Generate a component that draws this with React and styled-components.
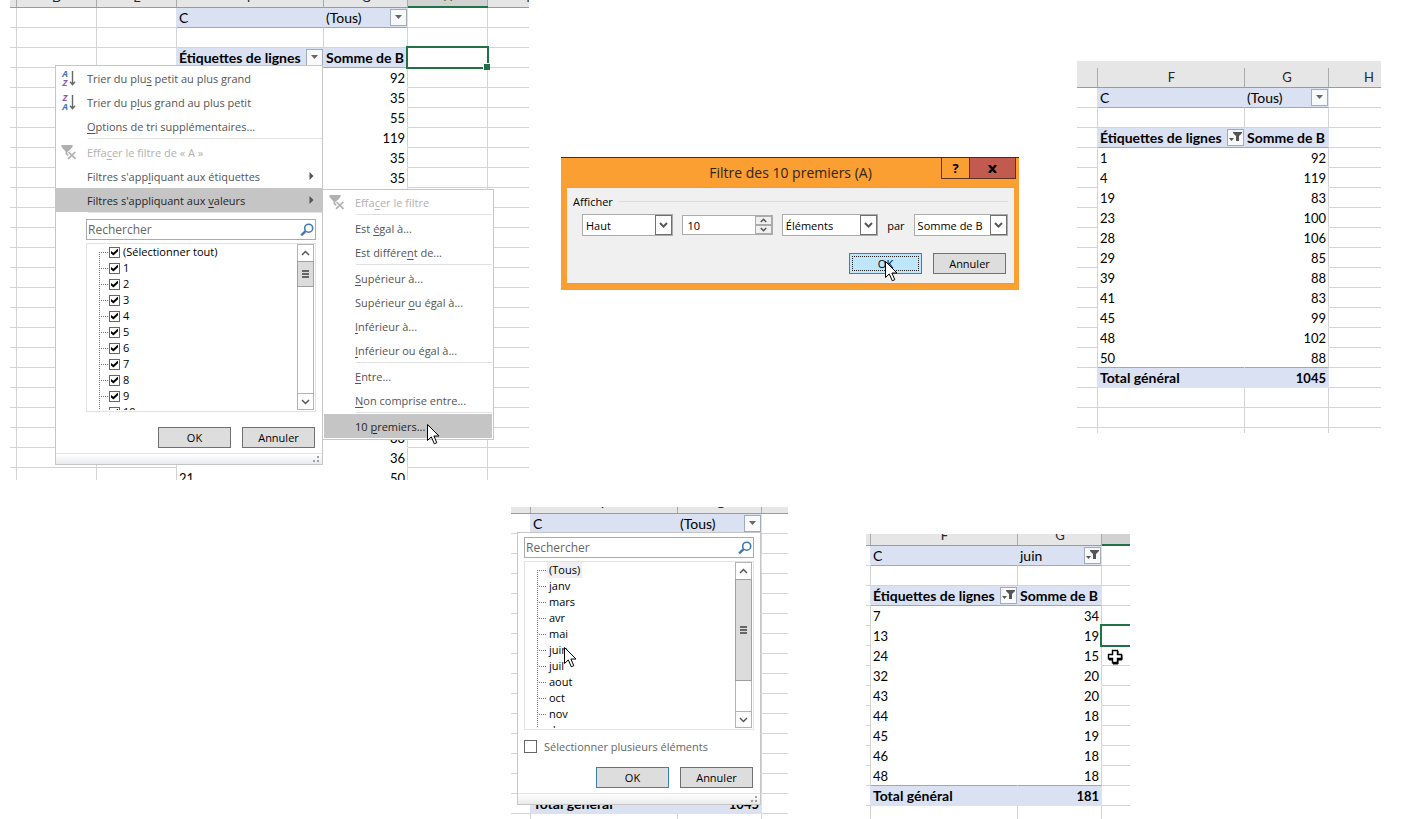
import React from "react";
import styled, { createGlobalStyle } from "styled-components";

const GlobalStyle = createGlobalStyle`
  * {
    box-sizing: border-box;
  }
  body {
    margin: 0;
    background: #fff;
    color: #000;
    font-family: "Open Sans", "Noto Sans", sans-serif;
    font-size: 11px;
  }
  button, input, select {
    font: inherit;
    color: inherit;
    margin: 0;
    padding: 0;
  }
`;

/* ---------- icons ---------- */

const ArrowCursor = () => (
  <svg width="13" height="21" viewBox="0 0 13 21" aria-hidden="true">
    <path d="M0.5 0.5V16.5L4.3 12.9L7.3 19.8L9.8 18.7L6.9 12H12Z" fill="#fff" stroke="#000" strokeLinejoin="miter" />
  </svg>
);

const CrossCursor = () => (
  <svg width="17" height="16" viewBox="0 0 17 16" aria-hidden="true">
    <path d="M6 2H11V6H15V11H11V15H6V11H2V6H6Z" fill="#000" stroke="#000" strokeWidth="1" />
    <path d="M5.5 1.5H10.5V5.5H14.5V9.5H10.5V13.5H5.5V9.5H1.5V5.5H5.5Z" fill="#fff" stroke="#000" strokeWidth="1.4" />
  </svg>
);

const CaretIcon = () => (
  <svg width="9" height="5" viewBox="0 0 9 5" aria-hidden="true">
    <path d="M1 0H8L4.5 4Z" fill="#666" />
  </svg>
);

const FilterIcon = () => (
  <svg width="15" height="13" viewBox="0 0 15 13" aria-hidden="true">
    <path d="M5 1H14V2L11 5V10H8V5L5 2Z" fill="#555" />
    <path d="M1 7H6L3.5 10Z" fill="#555" />
  </svg>
);

const SortLetter = styled.text`
  font-family: "Open Sans", sans-serif;
  font-size: 9px;
  font-weight: 700;
  text-anchor: middle;
`;

const SortIcon = ({ desc }) => (
  <svg width="16" height="17" viewBox="0 0 16 17" aria-hidden="true">
    <SortLetter x="4" y={desc ? 16 : 7} fill="#3f78b5">A</SortLetter>
    <SortLetter x="4" y={desc ? 7 : 16} fill="#8b57a8">Z</SortLetter>
    <path d="M11.5 1V14.5M9 11.8L11.5 14.6L14 11.8" fill="none" stroke="#666" strokeWidth="1.4" />
  </svg>
);

const ClearFilterIcon = () => (
  <svg width="16" height="16" viewBox="0 0 16 16" aria-hidden="true">
    <path d="M0.5 1H11.5V3L7.5 7.5V12.5L4.5 10V7.5L0.5 3Z" fill="#b0b0b0" />
    <path d="M7 7.5L15 15M14.5 7.5L6.5 15" stroke="#fff" strokeWidth="3.4" />
    <path d="M7.5 8L14.5 14.8M14.3 8L7 14.8" stroke="#b0b0b0" strokeWidth="1.7" />
  </svg>
);

const SearchIcon = () => (
  <svg width="14" height="14" viewBox="0 0 14 14" fill="none" stroke="#3f78b5" aria-hidden="true">
    <circle cx="8.7" cy="5.2" r="4" strokeWidth="1.6" />
    <path d="M5.6 8.2L1.2 12.4" strokeWidth="2.4" />
  </svg>
);

const Chevron = ({ up, bold }) => (
  <svg width="9" height="6" viewBox="0 0 9 6" fill="none" stroke="#555" strokeWidth={bold ? 2 : 1.4} aria-hidden="true">
    <path d={up ? "M1 5L4.5 1.4L8 5" : "M1 1L4.5 4.6L8 1"} />
  </svg>
);

const SubmenuArrow = () => (
  <svg width="5" height="8" viewBox="0 0 5 8" aria-hidden="true">
    <path d="M0.5 0V8L4.5 4Z" fill="#555" />
  </svg>
);

const Branch = ({ first, short }) => (
  <svg width={short ? 9 : 10} height="16" viewBox={`0 0 ${short ? 9 : 10} 16`} stroke="#777" strokeDasharray="1 1" aria-hidden="true">
    <path d={first ? "M0.5 8V16" : "M0.5 0V16"} />
    <path d="M2 8.5H10" />
  </svg>
);

const Grip = () => (
  <svg width="7" height="7" viewBox="0 0 7 7" fill="#a0a0a0" aria-hidden="true">
    <path d="M4 0H6V2H4ZM0 4H2V6H0ZM4 4H6V6H4Z" />
  </svg>
);

/* ---------- spreadsheet ---------- */

const SheetBox = styled.section`
  position: relative;
  overflow: hidden;
  margin-top: ${(p) => p.$top || 0}px;
  margin-left: ${(p) => p.$left || 0}px;
`;

const Table = styled.table`
  width: 100%;
  table-layout: fixed;
  border-collapse: separate;
  border-spacing: 0;
  font-family: Lato, "Liberation Sans", sans-serif;
  font-size: 13px;

  th, td {
    padding: 0;
    font-weight: normal;
    text-align: left;
  }
`;

const HeadCell = styled.th`
  background: ${(p) => (p.$selected ? "#d2d2d2" : "#e6e6e6")};
  border-bottom: ${(p) => (p.$selected ? "2px solid #217346" : "1px solid #9b9b9b")};
  color: ${(p) => (p.$selected ? "#217346" : "#262626")};
  overflow: hidden;
`;

const HeadLabel = styled.div`
  display: flex;
  justify-content: center;
  align-items: flex-end;
  height: ${(p) => p.$height}px;
  min-width: ${(p) => (p.$last ? 80 : 0)}px;
  line-height: 20px;
  overflow: hidden;
  background: linear-gradient(#ababab, #ababab) right bottom / ${(p) => (p.$last ? 0 : 1)}px 19px no-repeat;
`;

const GridCell = styled.td`
  position: relative;
  background: ${(p) => (p.$fill ? "#d9e1f2" : "#fff")};
  border-right: ${(p) => (p.$last ? 0 : 1)}px solid ${(p) => p.$right || "#d4d4d4"};
  border-bottom: ${(p) => (p.$cut ? 0 : 1)}px solid ${(p) => p.$bottom || "#d4d4d4"};
`;

const CellText = styled.div`
  display: flex;
  justify-content: ${(p) => (p.$end ? "flex-end" : "space-between")};
  align-items: center;
  height: ${(p) => p.$height}px;
  padding-left: 2px;
  padding-right: ${(p) => (p.$end ? 2 : 0)}px;
  overflow: hidden;
  white-space: nowrap;
  font-weight: ${(p) => (p.$bold ? "bold" : "normal")};
  font-size: ${(p) => (p.$number ? 13 : 14)}px;

  span {
    line-height: ${(p) => (p.$number ? 21 : 19)}px;
    align-self: flex-start;
  }
`;

const FilterButton = styled.button`
  display: flex;
  justify-content: center;
  align-items: center;
  flex: none;
  width: 17px;
  height: 17px;
  border: 1px solid #a3abb8;
  background: #f8f9fb;
`;

const Selection = styled.div`
  position: absolute;
  inset: -2px;
  right: ${(p) => (p.$open ? -8 : -2)}px;
  border: 2px solid #217346;
  z-index: 1;

  &::after {
    content: "";
    position: absolute;
    right: -3px;
    bottom: -3px;
    width: 6px;
    height: 6px;
    background: #217346;
    border: solid #fff;
    border-width: 1px 0 0 1px;
  }
`;

const BLUE = "#8ea9db";
const FILL = "#d9e1f2";

const edges = (kind) => {
  if (kind === "filter" || kind === "title") return { fill: true, bottom: BLUE, inner: FILL };
  if (kind === "total") return { fill: true, bottom: FILL, inner: FILL };
  if (kind === "last") return { bottom: BLUE, inner: "#fff" };
  if (kind === "data") return { bottom: "#fff", inner: "#fff" };
  return {};
};

const SheetRow = ({ row, before, after, selectedRow, openSelection }) => {
  const { kind, label, value, filters = {}, cut } = row;
  const e = edges(kind);
  const bold = kind === "title" || kind === "total";
  const height = cut || 19;
  return (
    <tr>
      {Array.from({ length: before }, (_, i) => (
        <GridCell key={i} $cut={cut} $right={e.fill && i === before - 1 ? FILL : undefined} />
      ))}
      <GridCell $fill={e.fill} $right={e.inner} $bottom={e.bottom} $cut={cut}>
        <CellText $height={height} $bold={bold} $number={typeof label === "number"}>
          <span>{label}</span>
          {filters.label && (
            <FilterButton type="button" aria-label="Filtrer les lignes">
              {filters.label === "on" ? <FilterIcon /> : <CaretIcon />}
            </FilterButton>
          )}
        </CellText>
      </GridCell>
      <GridCell $fill={e.fill} $right={e.fill ? FILL : undefined} $bottom={e.bottom} $cut={cut}>
        <CellText
          $height={height}
          $bold={bold}
          $number={typeof value === "number"}
          $end={kind === "data" || kind === "last" || kind === "total"}
        >
          <span>{value}</span>
          {filters.value && (
            <FilterButton type="button" aria-label="Filtrer C">
              {filters.value === "on" ? <FilterIcon /> : <CaretIcon />}
            </FilterButton>
          )}
        </CellText>
      </GridCell>
      {Array.from({ length: after }, (_, i) => (
        <GridCell key={i} $cut={cut} $last={i === after - 1}>
          {selectedRow && i === 0 && <Selection $open={openSelection} />}
        </GridCell>
      ))}
    </tr>
  );
};

const Sheet = ({ name, cols, heads, headHeight, selectedHead, rows, selected, openSelection, before, top, left, children }) => (
  <SheetBox aria-label={name} $top={top} $left={left}>
    <Table>
      <colgroup>
        {cols.map((w, i) => (
          <col key={i} style={{ width: w }} />
        ))}
      </colgroup>
      <thead>
        <tr>
          {heads.map((h, i) => (
            <HeadCell key={i} scope="col" $selected={selectedHead === i}>
              <HeadLabel $height={selectedHead === i ? headHeight - 2 : headHeight - 1} $last={i === heads.length - 1}>
                {h}
              </HeadLabel>
            </HeadCell>
          ))}
        </tr>
      </thead>
      <tbody>
        {rows.map((row, i) => (
          <SheetRow
            key={i}
            row={row}
            before={before}
            after={cols.length - before - 2}
            selectedRow={selected === i}
            openSelection={openSelection}
          />
        ))}
      </tbody>
    </Table>
    {children}
  </SheetBox>
);

/* ---------- popups ---------- */

const Popup = styled.div`
  position: absolute;
  left: ${(p) => p.$x}px;
  top: ${(p) => p.$y}px;
  width: ${(p) => p.$width}px;
  padding: ${(p) => (p.$inset ? "0 1px 1px" : 0)};
  background: #fff;
  border: 1px solid #c6c6c6;
  z-index: 2;
`;

const MenuItem = styled.button`
  display: flex;
  align-items: center;
  width: 100%;
  height: 24px;
  padding-right: 8px;
  border: 0;
  text-align: left;
  white-space: nowrap;
  background: ${(p) => (p.$active ? "#c5c5c5" : "transparent")};
  color: ${(p) => (p.disabled ? "#b1b1b1" : p.$active ? "#262626" : "#555")};

  span {
    flex: 1;
  }
  u {
    text-underline-offset: 2px;
  }
`;

const MenuIcon = styled.i`
  display: flex;
  width: 31px;
  padding-left: 5px;
`;

const Separator = styled.hr`
  margin: 0 0 1px 32px;
  border: 0;
  border-top: 1px solid #e1e1e1;
`;

const ListArea = styled.div`
  padding: ${(p) => (p.$menu ? "5px 6px 0 30px" : "4px 6px 0 6px")};
`;

const SearchField = styled.label`
  display: flex;
  align-items: center;
  height: 21px;
  padding-right: 1px;
  border: 1px solid #ababab;

  input {
    flex: 1;
    min-width: 0;
    height: 19px;
    padding-left: 1px;
    border: 0;
    outline: 0;
    background: transparent;
    font-size: 12px;
  }
  input::placeholder {
    color: #666;
    opacity: 1;
  }
`;

const TreeBox = styled.div`
  display: flex;
  height: 169px;
  margin-top: 3px;
  padding: 0 1px 1px;
  border: 1px solid #e1e3e6;
`;

const Tree = styled.ul`
  flex: 1;
  margin: 0;
  padding-left: 11px;
  overflow: hidden;
  list-style: none;
`;

const TreeItem = styled.li`
  display: flex;
  align-items: center;
  height: 16px;
  line-height: 16px;

  label {
    display: flex;
    align-items: center;
    gap: 3px;
  }
`;

const TreeLabel = styled.span`
  margin-left: 1px;
  padding: 0 2px;
  background: ${(p) => (p.$active ? "#efefef" : "transparent")};
`;

const CheckBox = styled.input`
  appearance: none;
  display: flex;
  justify-content: center;
  align-items: center;
  width: ${(p) => p.$size}px;
  height: ${(p) => p.$size}px;
  border: 1px solid #666;
  background: #fff;

  &:checked::after {
    content: "";
    width: 7px;
    height: 7px;
    background: #000;
    clip-path: polygon(0 35%, 35% 60%, 100% 0, 100% 40%, 35% 100%, 0 70%);
  }
`;

const Scroll = styled.div`
  display: flex;
  flex-direction: column;
  width: 17px;
  border: 1px solid #b4b4b4;
  background: #fff;
`;

const ScrollButton = styled.button`
  display: flex;
  justify-content: center;
  align-items: center;
  height: 16px;
  border: 0;
  background: #fff;
  border-top: ${(p) => (p.$down ? 1 : 0)}px solid #b4b4b4;
`;

const Thumb = styled.div`
  display: flex;
  flex-direction: column;
  justify-content: center;
  align-items: center;
  gap: 1px;
  height: ${(p) => p.$length}px;
  margin: 0 -1px auto;
  border: 1px solid #a0a0a0;
  background: #dcdcdc;

  i {
    width: 7px;
    height: 2px;
    background: #666;
  }
`;

const ScrollBar = ({ length }) => (
  <Scroll>
    <ScrollButton type="button" aria-label="Monter">
      <Chevron up />
    </ScrollButton>
    <Thumb $length={length}>
      <i />
      <i />
      <i />
    </Thumb>
    <ScrollButton type="button" aria-label="Descendre" $down>
      <Chevron />
    </ScrollButton>
  </Scroll>
);

const MultiSelect = styled.label`
  display: flex;
  align-items: center;
  gap: 7px;
  height: 13px;
  margin-top: 10px;
  color: #666;
`;

const Actions = styled.div`
  display: flex;
  justify-content: flex-end;
  gap: 11px;
  padding: ${(p) => p.$pad};
`;

const Button = styled.button`
  width: 73px;
  height: 21px;
  border: 1px solid ${(p) => (p.$primary ? "#3c7fb1" : "#707070")};
  background: ${(p) => (p.$hot ? "#bee6fd" : "#ddd")};
  outline: ${(p) => (p.$hot ? "1px dotted #222" : "none")};
  outline-offset: -4px;
`;

const PopupFoot = styled.div`
  display: flex;
  justify-content: flex-end;
  align-items: flex-end;
  height: 11px;
  padding: 0 2px 1px;
  border-top: 1px solid #dce6ee;
  background: linear-gradient(#fff, #e8eaec);
`;

const Pointer = styled.div`
  position: absolute;
  left: ${(p) => p.$x}px;
  top: ${(p) => p.$y}px;
  z-index: 3;
  pointer-events: none;

  svg {
    display: block;
  }
`;

const Search = () => (
  <SearchField>
    <input type="text" placeholder="Rechercher" aria-label="Rechercher" />
    <SearchIcon />
  </SearchField>
);

const FilterMenu = () => (
  <Popup $x={45} $y={65} $width={268}>
    <MenuItem type="button">
      <MenuIcon><SortIcon /></MenuIcon>
      <span>Trier du plu<u>s</u> petit au plus grand</span>
    </MenuItem>
    <MenuItem type="button">
      <MenuIcon><SortIcon desc /></MenuIcon>
      <span>Trier du p<u>l</u>us grand au plus petit</span>
    </MenuItem>
    <MenuItem type="button">
      <MenuIcon />
      <span><u>O</u>ptions de tri supplémentaires...</span>
    </MenuItem>
    <Separator />
    <MenuItem type="button" disabled>
      <MenuIcon><ClearFilterIcon /></MenuIcon>
      <span>Effa<u>c</u>er le filtre de « A »</span>
    </MenuItem>
    <MenuItem type="button">
      <MenuIcon />
      <span>Filtres s'app<u>l</u>iquant aux étiquettes</span>
      <SubmenuArrow />
    </MenuItem>
    <MenuItem type="button" $active>
      <MenuIcon />
      <span>Filtres s'appliquant aux <u>v</u>aleurs</span>
      <SubmenuArrow />
    </MenuItem>
    <Separator />
    <ListArea $menu>
      <Search />
      <TreeBox>
        <Tree>
          {["(Sélectionner tout)", 1, 2, 3, 4, 5, 6, 7, 8, 9, 10].map((t, i) => (
            <TreeItem key={t}>
              <Branch first={i === 0} />
              <label>
                <CheckBox type="checkbox" defaultChecked $size={11} />
                {t}
              </label>
            </TreeItem>
          ))}
        </Tree>
        <ScrollBar length={26} />
      </TreeBox>
    </ListArea>
    <Actions $pad="15px 7px 5px">
      <Button type="button">OK</Button>
      <Button type="button">Annuler</Button>
    </Actions>
    <PopupFoot><Grip /></PopupFoot>
  </Popup>
);

const ValueMenu = () => (
  <Popup $x={312} $y={189} $width={172} $inset>
    <MenuItem type="button" disabled>
      <MenuIcon><ClearFilterIcon /></MenuIcon>
      <span>Effa<u>c</u>er le filtre</span>
    </MenuItem>
    <Separator />
    <MenuItem type="button"><MenuIcon /><span>Est <u>é</u>gal à...</span></MenuItem>
    <MenuItem type="button"><MenuIcon /><span>Est différe<u>n</u>t de...</span></MenuItem>
    <Separator />
    <MenuItem type="button"><MenuIcon /><span><u>S</u>upérieur à...</span></MenuItem>
    <MenuItem type="button"><MenuIcon /><span>Supérieur <u>o</u>u égal à...</span></MenuItem>
    <MenuItem type="button"><MenuIcon /><span><u>I</u>nférieur à...</span></MenuItem>
    <MenuItem type="button"><MenuIcon /><span><u>I</u>nférieur ou égal à...</span></MenuItem>
    <Separator />
    <MenuItem type="button"><MenuIcon /><span><u>E</u>ntre...</span></MenuItem>
    <MenuItem type="button"><MenuIcon /><span><u>N</u>on comprise entre...</span></MenuItem>
    <Separator />
    <MenuItem type="button" $active><MenuIcon /><span>10 <u>p</u>remiers...</span></MenuItem>
  </Popup>
);

const PageFilter = () => (
  <Popup $x={6} $y={25} $width={244}>
    <ListArea>
      <Search />
      <TreeBox>
        <Tree>
          {["(Tous)", "janv", "mars", "avr", "mai", "juin", "juil", "aout", "oct", "nov", "dec"].map((t, i) => (
            <TreeItem key={t}>
              <Branch first={i === 0} short />
              <TreeLabel $active={i === 0}>{t}</TreeLabel>
            </TreeItem>
          ))}
        </Tree>
        <ScrollBar length={102} />
      </TreeBox>
      <MultiSelect>
        <CheckBox type="checkbox" $size={13} />
        Sélectionner plusieurs éléments
      </MultiSelect>
    </ListArea>
    <Actions $pad="14px 7px 5px">
      <Button type="button" $primary>OK</Button>
      <Button type="button">Annuler</Button>
    </Actions>
    <PopupFoot><Grip /></PopupFoot>
  </Popup>
);

/* ---------- top 10 dialog ---------- */

const DialogBox = styled.section`
  position: relative;
  margin-top: 157px;
  padding: 0 5px 6px 6px;
  background: #fb9f33;
  border-top: 1px solid #333;
`;

const TitleBar = styled.header`
  display: grid;
  grid-template-columns: 76px 1fr 76px;
  height: 29px;

  h1 {
    grid-column: 2;
    margin: 0;
    font-size: 14px;
    font-weight: normal;
    line-height: 30px;
    text-align: center;
    white-space: nowrap;
    color: #33240f;
  }
`;

const WindowButtons = styled.div`
  display: flex;
  height: 21px;
  margin-right: -2px;
  justify-content: flex-end;
`;

const WindowButton = styled.button`
  width: ${(p) => (p.$close ? 47 : 29)}px;
  border: 1px solid #5b3320;
  border-top: 0;
  margin-left: ${(p) => (p.$close ? -1 : 0)}px;
  background: ${(p) => (p.$close ? "#c35a50" : "transparent")};
  font-size: 13px;
  line-height: 18px;
  font-weight: bold;
`;

const DialogBody = styled.div`
  padding: 6px 6px 9px;
  background: #f0f0f0;
  border: solid #b5a596;
  border-width: 1px 0;
`;

const GroupTitle = styled.div`
  display: flex;
  align-items: center;
  gap: 5px;
  height: 15px;

  &::after {
    content: "";
    flex: 1;
    border-top: 1px solid #d5dfe5;
  }
`;

const Fields = styled.div`
  display: flex;
  align-items: center;
  gap: 9px;
  padding: 5px 0 0 9px;
`;

const SelectBox = styled.div`
  position: relative;
  flex: ${(p) => p.$grow} 1 0;

  select {
    appearance: none;
    display: block;
    width: 100%;
    height: 22px;
    padding-left: 3px;
    border: 1px solid #ababab;
    border-radius: 0;
    background: #fff;
  }
  span {
    position: absolute;
    top: 1px;
    right: 1px;
    bottom: 1px;
    display: flex;
    justify-content: center;
    align-items: center;
    width: 17px;
    border: 1px solid #707070;
    background: #fff;
    pointer-events: none;
  }
`;

const Spinner = styled.div`
  display: flex;
  flex: 89 1 0;
  min-width: 0;
  height: 20px;
  border: 1px solid #ababab;
  background: #fff;

  input {
    flex: 1;
    min-width: 0;
    padding-left: 4px;
    border: 0;
    outline: 0;
  }
`;

const SpinButtons = styled.div`
  display: flex;
  flex-direction: column;
  width: 17px;

  button {
    display: flex;
    flex: 1;
    justify-content: center;
    align-items: center;
    border: 1px solid #ababab;
    background: #f0f0f0;
  }
  svg {
    width: 7px;
    height: 5px;
  }
`;

const Select = ({ label, value, grow }) => (
  <SelectBox $grow={grow}>
    <select aria-label={label} defaultValue={value}>
      <option>{value}</option>
    </select>
    <span><Chevron bold /></span>
  </SelectBox>
);

const TopTenDialog = () => (
  <DialogBox role="dialog" aria-labelledby="titre">
    <TitleBar>
      <h1 id="titre">Filtre des 10 premiers (A)</h1>
      <WindowButtons>
        <WindowButton type="button">?</WindowButton>
        <WindowButton type="button" aria-label="Fermer" $close>
          <svg width="9" height="8" viewBox="0 0 9 8" aria-hidden="true">
            <path d="M1 0L8 8M8 0L1 8" stroke="#000" strokeWidth="2.4" />
          </svg>
        </WindowButton>
      </WindowButtons>
    </TitleBar>
    <DialogBody>
      <GroupTitle>Afficher</GroupTitle>
      <Fields>
        <Select label="Sens" value="Haut" grow={92} />
        <Spinner>
          <input type="text" aria-label="Nombre" defaultValue="10" />
          <SpinButtons>
            <button type="button" aria-label="Augmenter"><Chevron up bold /></button>
            <button type="button" aria-label="Diminuer"><Chevron bold /></button>
          </SpinButtons>
        </Spinner>
        <Select label="Type" value="Éléments" grow={97} />
        <span>par</span>
        <Select label="Champ" value="Somme de B" grow={95} />
      </Fields>
      <Actions $pad="17px 2px 0">
        <Button type="button" $primary $hot>OK</Button>
        <Button type="button">Annuler</Button>
      </Actions>
    </DialogBody>
    <Pointer $x={324} $y={103}><ArrowCursor /></Pointer>
  </DialogBox>
);

/* ---------- data ---------- */

const topRows = (filter, valueFilter, labelFilter) => [
  { kind: "filter", label: "C", value: filter, filters: { value: valueFilter } },
  {},
  { kind: "title", label: "Étiquettes de lignes", value: "Somme de B", filters: { label: labelFilter } },
];

const dataRows = (pairs) =>
  pairs.map(([label, value], i) => ({ kind: i === pairs.length - 1 ? "last" : "data", label, value }));

const allRows = [
  ...topRows("(Tous)", "off", "off"),
  ...[92, 35, 55, 119, 35, 35].map((value) => ({ kind: "data", value })),
  ...Array.from({ length: 12 }, () => ({ kind: "data" })),
  { kind: "data", value: 83 },
  { kind: "data", value: 36 },
  { kind: "data", label: 21, value: 50, cut: 12 },
];

const topTenRows = [
  ...topRows("(Tous)", "off", "on"),
  ...dataRows([[1, 92], [4, 119], [19, 83], [23, 100], [28, 106], [29, 85], [39, 88], [41, 83], [45, 99], [48, 102], [50, 88]]),
  { kind: "total", label: "Total général", value: 1045 },
  {},
  {},
  { cut: 5 },
];

const coveredRows = [
  { kind: "filter", label: "C", value: "(Tous)", filters: { value: "off" } },
  {},
  { kind: "title" },
  ...Array.from({ length: 11 }, () => ({ kind: "data" })),
  { kind: "total", label: "Total général", value: 1045 },
  { cut: 5 },
];

const juneRows = [
  ...topRows("juin", "on", "on"),
  ...dataRows([[7, 34], [13, 19], [24, 15], [32, 20], [43, 20], [44, 18], [45, 19], [46, 18], [48, 18]]),
  { kind: "total", label: "Total général", value: 181 },
  { cut: 13 },
];

/* ---------- page ---------- */

const Page = styled.main`
  display: flex;
  flex-direction: column;
  gap: 27px;
`;

const TopBand = styled.div`
  display: grid;
  grid-template-columns: minmax(519px, 519fr) minmax(458px, 458fr) minmax(330px, 330fr);
  column-gap: 32px;
  align-items: start;
  padding: 0 38px 0 10px;
`;

const BottomBand = styled.div`
  display: grid;
  grid-template-columns: minmax(277px, 277fr) minmax(264px, 264fr);
  column-gap: 78px;
  align-items: start;
  padding: 0 289px 0 511px;
`;

const App = () => {
  return (
    <>
      <GlobalStyle />
      <Page>
        <TopBand>
          <Sheet
            name="Tableau complet"
            cols={["7px", "80px", "80px", "147px", "84px", "80px", "auto"]}
            heads={["", "D", "E", "F", "G", "H", "I"]}
            headHeight={8}
            selectedHead={5}
            rows={allRows}
            selected={2}
            before={3}
          >
            <FilterMenu />
            <ValueMenu />
            <Pointer $x={417} $y={424}><ArrowCursor /></Pointer>
          </Sheet>
          <TopTenDialog />
          <Sheet
            name="Dix premiers"
            cols={["21px", "147px", "84px", "auto"]}
            heads={["", "F", "G", "H"]}
            headHeight={27}
            rows={topTenRows}
            before={1}
            top={61}
            left={26}
          />
        </TopBand>
        <BottomBand>
          <Sheet
            name="Filtre par mois"
            cols={["20px", "147px", "84px", "auto"]}
            heads={["", "F", "G", ""]}
            headHeight={7}
            rows={coveredRows}
            before={1}
          >
            <PageFilter />
            <Pointer $x={53} $y={140}><ArrowCursor /></Pointer>
          </Sheet>
          <Sheet
            name="Juin"
            cols={["5px", "147px", "84px", "auto"]}
            heads={["", "F", "G", ""]}
            headHeight={12}
            selectedHead={3}
            rows={juneRows}
            selected={4}
            openSelection
            before={1}
            top={27}
          >
            <Pointer $x={241} $y={115}><CrossCursor /></Pointer>
          </Sheet>
        </BottomBand>
      </Page>
    </>
  );
};

export default App;
